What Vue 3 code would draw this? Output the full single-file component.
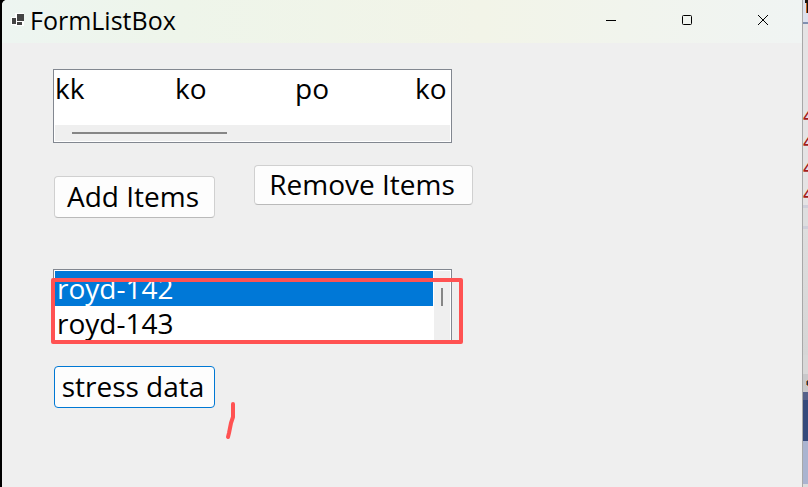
<script setup>
import { ref } from 'vue'

const columns = ref(['kk', 'ko', 'po', 'ko'])
const stressItems = ref(['royd-142', 'royd-143'])
const selected = ref('royd-142')
const marks = ['4', '4', '4', '4']
</script>

<template>
  <div class="desktop">
    <main class="window">
      <header class="titlebar">
        <svg class="app-icon" viewBox="0 0 14 14" aria-hidden="true">
          <rect x="0" y="4" width="5" height="8" fill="#fff" />
          <rect x="4" y="0" width="9" height="13" fill="#fff" />
          <rect x="1" y="5" width="4" height="6" fill="#444" />
          <rect x="6" y="1" width="7" height="7" fill="#444" />
          <rect x="6" y="9" width="5" height="3" fill="#444" />
        </svg>
        <h1 class="title">FormListBox</h1>
        <div class="caption-buttons">
          <button type="button" class="caption" aria-label="Minimize">
            <svg viewBox="0 0 12 12"><path d="M1 6.5H11" /></svg>
          </button>
          <button type="button" class="caption" aria-label="Maximize">
            <svg viewBox="0 0 12 12"><rect x="1.5" y="1.5" width="9" height="9" rx="1" /></svg>
          </button>
          <button type="button" class="caption" aria-label="Close">
            <svg viewBox="0 0 12 12"><path d="M1 1L11 11M11 1L1 11" /></svg>
          </button>
        </div>
      </header>

      <section class="form">
        <div class="listbox stacked">
          <ul class="columns" role="listbox" aria-label="Items">
            <li v-for="(item, i) in columns" :key="i" role="option" aria-selected="false">{{ item }}</li>
          </ul>
          <div class="scroll-x"><span class="thumb-x"></span></div>
        </div>

        <div class="actions">
          <button type="button" class="btn add">Add Items</button>
          <button type="button" class="btn remove">Remove Items</button>
        </div>

        <div class="annotated">
          <div class="listbox side">
            <ul class="rows" role="listbox" aria-label="Stress data">
              <li
                v-for="item in stressItems"
                :key="item"
                role="option"
                :aria-selected="item === selected"
                :class="{ selected: item === selected }"
                @click="selected = item"
              >{{ item }}</li>
            </ul>
            <div class="scroll-y"><span class="thumb-y"></span></div>
          </div>
          <span class="highlight"></span>
        </div>

        <div class="stress-row">
          <button type="button" class="btn focused">stress data</button>
          <svg class="stroke" viewBox="0 0 12 40" aria-hidden="true">
            <path d="M8 3V16L6 22L5 27L4 32L3 36" />
          </svg>
        </div>
      </section>
    </main>

    <aside class="behind" aria-hidden="true">
      <div class="tab-strip">
        <svg viewBox="0 0 5 14"><path d="M2 0H5V13H4V3H2Z" fill="#1c1410" /><path d="M3 3H4V13H3Z" fill="#c8641e" /></svg>
      </div>
      <div class="code">
        <span v-for="(m, i) in marks" :key="i">{{ m }}</span>
      </div>
      <div class="panel"></div>
      <div class="label-strip">
        <svg viewBox="0 0 5 6"><path d="M5 0H4V1H3V5H4V6H5Z" fill="#b87a38" /><path d="M4 1H5V5H4Z" fill="#1d2c55" /></svg>
      </div>
      <div class="navy-top"></div>
      <div class="navy"></div>
      <div class="pale"></div>
    </aside>
  </div>
</template>

<style>
body {
  margin: 0;
  background: #000;
}
</style>

<style scoped>
.desktop {
  display: flex;
  min-height: 100vh;
  box-sizing: border-box;
  padding-left: 2px;
  overflow: hidden;
  font-family: "Open Sans", "Noto Sans", sans-serif;
  color: #000;
}
.window {
  flex: 1;
  min-width: 0;
  background: #efefef;
  border-right: 1px solid #a8a8a8;
  border-radius: 5px 0 0 0;
  overflow: hidden;
}
.titlebar {
  display: flex;
  align-items: center;
  height: 43px;
  padding-left: 9px;
  background: linear-gradient(90deg, #edf5f1 0%, #eef5ea 22%, #f2f4e8 60%, #f1f4ed 78%, #f0f4f3 100%);
}
.app-icon {
  width: 14px;
  height: 14px;
  margin-bottom: 4px;
}
.title {
  flex: 1;
  margin: 0 0 0 5px;
  font-size: 25px;
  line-height: 40px;
  padding-bottom: 3px;
  font-weight: 400;
}
.caption-buttons {
  display: flex;
  padding-right: 1px;
}
.caption {
  display: flex;
  align-items: center;
  justify-content: center;
  width: 76px;
  height: 43px;
  padding: 0 0 3px;
  border: 0;
  background: none;
}
.caption svg {
  width: 12px;
  height: 12px;
  fill: none;
  stroke: #000;
}
.form {
  padding: 26px 51px 0;
  font-size: 28px;
  line-height: 35px;
}
.listbox {
  display: flex;
  box-sizing: border-box;
  width: 399px;
  max-width: 100%;
  height: 74px;
  padding: 1px;
  border: 1px solid #828790;
  background: #fff;
}
.stacked {
  flex-direction: column;
}
.columns,
.rows {
  flex: 1;
  margin: 0;
  padding: 0;
  list-style: none;
  overflow: hidden;
}
.columns {
  display: flex;
}
.columns li {
  flex: 0 0 120px;
}
.rows li {
  padding-left: 2px;
}
.rows .selected {
  background: #0078d7;
  color: #fff;
}
.scroll-x {
  height: 16px;
  background: #efefef;
}
.thumb-x {
  display: block;
  width: 155px;
  height: 2px;
  margin: 7px 0 0 17px;
  background: #868686;
}
.scroll-y {
  width: 16px;
  margin-left: 1px;
  background: #efefef;
}
.thumb-y {
  display: block;
  width: 2px;
  height: 18px;
  margin: 17px 0 0 7px;
  background: #868686;
}
.actions {
  display: flex;
  align-items: flex-start;
  gap: 39px;
  padding: 22px 0 51px 1px;
}
.btn {
  box-sizing: border-box;
  padding: 0 3px 2px 0;
  border: 1px solid #d0d0d0;
  border-bottom-color: #bababa;
  border-radius: 4px;
  background: #fdfdfd;
  color: #000;
  font: inherit;
  white-space: nowrap;
}
.add,
.focused {
  width: 161px;
  height: 42px;
}
.add {
  margin-top: 11px;
}
.remove {
  width: 219px;
  height: 40px;
}
.focused {
  border-color: #0078d4;
}
.annotated {
  position: relative;
  width: 399px;
}
.highlight {
  position: absolute;
  left: -2px;
  top: 9px;
  right: -11px;
  bottom: -1px;
  border: 4px solid #ff5252;
  border-radius: 2px;
  pointer-events: none;
}
.stress-row {
  display: flex;
  align-items: flex-start;
  gap: 10px;
  padding: 23px 0 0 1px;
}
.stroke {
  width: 12px;
  height: 40px;
  margin-top: 35px;
  fill: none;
  stroke: #ff5252;
  stroke-width: 4px;
  stroke-linecap: round;
  stroke-linejoin: round;
}
.behind {
  flex: 0 0 5px;
  display: flex;
  flex-direction: column;
  overflow: hidden;
  background: #dcdcdc;
}
.behind svg {
  display: block;
  width: 5px;
}
.tab-strip {
  height: 22px;
  border-bottom: 2px solid #8090b0;
  background: #dce1ee;
}
.tab-strip svg {
  height: 14px;
}
.code {
  box-sizing: border-box;
  height: 181px;
  padding-top: 77px;
  background: #e5e3e4;
  color: #a51c1c;
  font-size: 22px;
  line-height: 26px;
}
.code span {
  display: block;
}
.panel {
  height: 147px;
  border-top: 3px solid #cfcfda;
  border-bottom: 19px solid #d8d8d8;
  background: linear-gradient(#dededf 18px, #cfcfda 18px, #cfcfda 21px, #dedede 21px, #d6d6d6);
}
.label-strip {
  box-sizing: border-box;
  height: 18px;
  padding-top: 6px;
  background: #c8c8ca;
}
.label-strip svg {
  height: 6px;
}
.navy-top {
  height: 8px;
  background: #56618a;
}
.navy {
  height: 41px;
  background: #34497a;
}
.pale {
  height: 43px;
  background: #aab4d0;
}
</style>
